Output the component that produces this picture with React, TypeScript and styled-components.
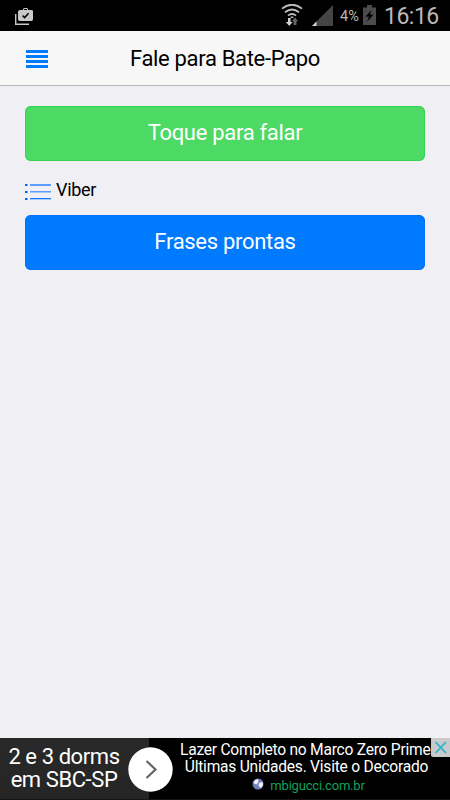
import React from 'react';
import styled, { createGlobalStyle } from 'styled-components';

const GlobalStyle = createGlobalStyle`
  *, *::before, *::after { box-sizing: border-box; }
  body { margin: 0; background: #efeff4; font-family: Roboto, sans-serif; }
`;

const Screen = styled.div`
  display: flex;
  flex-direction: column;
  width: 450px;
  height: 800px;
  overflow: hidden;
  background: #efeff4;
`;

const StatusBar = styled.div`
  display: flex;
  flex: 0 0 31px;
  justify-content: space-between;
  background: #000;
  padding: 0 11px 0 15px;
`;

const StatusGroup = styled.div`
  display: flex;
  align-items: flex-start;
`;

const Icon = styled.svg<{ $left?: number; $top?: number }>`
  display: block;
  flex: none;
  margin-left: ${(p) => p.$left ?? 0}px;
  margin-top: ${(p) => p.$top ?? 0}px;
`;

const Battery = styled.span`
  width: 19px;
  margin: 8px 0 0 7px;
  color: #b9b9b9;
  font-size: 14.5px;
  line-height: 17px;
  white-space: nowrap;
`;

const Clock = styled.span`
  width: 55px;
  margin: 3px 0 0 8px;
  color: #b9b9b9;
  font-size: 23px;
  letter-spacing: -0.5px;
  line-height: 28px;
  white-space: nowrap;
`;

const Header = styled.header`
  display: grid;
  grid-template-columns: 26px 348px 26px;
  flex: 0 0 55px;
  height: 55px;
  padding: 0 25px;
  background: #f7f7f8;
  border-bottom: 1px solid #b7b7bb;
`;

const Title = styled.h1`
  margin: 0;
  padding-top: 1px;
  color: #000;
  font-size: 22px;
  font-weight: 400;
  letter-spacing: -0.32px;
  line-height: 53px;
  text-align: center;
`;

const Content = styled.main`
  display: flex;
  flex: 1;
  flex-direction: column;
  padding: 20px 25px 0;
`;

const ActionButton = styled.button<{ $color: string; $edge: string }>`
  height: 55px;
  padding: 0 0 2px;
  border: 0;
  border-radius: 6px;
  background: ${(p) => p.$color};
  box-shadow: inset 0 0 0 1px ${(p) => p.$edge};
  color: #fff;
  font: 400 22px/53px Roboto, sans-serif;
  letter-spacing: -0.3px;
`;

const Target = styled.div`
  display: flex;
  height: 54px;
  color: #000;
  font-size: 18px;
  letter-spacing: -0.3px;
  line-height: 58px;
`;

const TargetName = styled.span`
  margin-left: 4px;
`;

const Ad = styled.footer`
  position: relative;
  display: flex;
  flex: 0 0 62px;
  background: #000;
  color: #fff;
  border-bottom: 1px solid #151515;
`;

const Offer = styled.div`
  width: 149px;
  padding: 7px 21px 0 0;
  background: linear-gradient(#292929, #252525);
  font-size: 22px;
  letter-spacing: -0.42px;
  line-height: 23px;
  text-align: center;
  white-space: nowrap;
`;

const AdCopy = styled.div`
  width: 253px;
  margin-left: 31px;
  padding-top: 4px;
  font-size: 15.6px;
  letter-spacing: -0.25px;
  line-height: 17px;
  text-align: center;
  white-space: nowrap;
`;

const AdLink = styled.div`
  display: flex;
  justify-content: center;
  margin-top: 2px;
  padding-left: 4px;
  color: #10a15c;
  font-size: 13px;
  letter-spacing: -0.2px;
  line-height: 16px;
`;

const LinkText = styled.span`
  margin-left: 6px;
`;

const Arrow = styled.svg`
  position: absolute;
  top: 8px;
  left: 128px;
`;

const Close = styled.svg`
  position: absolute;
  top: 0;
  right: 0;
`;

export default function App() {
  return (
    <Screen>
      <GlobalStyle />
      <StatusBar>
        <Icon $top={8} width="18" height="17" viewBox="0 0 18 17">
          <path d="M.7 6v10.2H14" fill="none" stroke="#c8c8c8" strokeWidth="1.4" />
          <path d="M5 2h3V1l1-1h3l1 1v1h3.5q1.3 0 1.5 1.3V11q0 2-1.5 2H4.7Q3 13 3 11V4q0-2 2-2zm4-1v1h3V1z" fill="#c8c8c8" fillRule="evenodd" />
          <path d="m7.6 7.6 2 2 4-4.4" fill="none" stroke="#000" strokeWidth="1.5" />
        </Icon>
        <StatusGroup>
          <Icon $top={4} width="22" height="22" viewBox="0 0 22 22">
            <g fill="none" stroke="#bdbdbd" strokeWidth="1.8">
              <path d="M1 4.6q10-7.8 20 0" />
              <path d="M4 8.2q7-5.5 14 0" />
              <path d="M7 11.6q4-3.2 8 0" />
            </g>
            <path d="m9 13.2 2-1 2 1-2 1z" fill="#bdbdbd" />
            <path d="M7 14h2.6v4h2L8.3 22l-3.5-4H7z" fill="#d0d0d0" />
            <path d="m14 13.5 3.2 3.8h-1.8V21h-2.8v-3.7h-1.8z" fill="#666" />
          </Icon>
          <Icon $left={9} $top={5} width="21" height="21" viewBox="0 0 21 21">
            <path d="M21 0v21H0z" fill="#444" />
            <path d="M4.5 16.5V21H0z" fill="#d5d5d5" />
          </Icon>
          <Battery>4%</Battery>
          <Icon $left={4} $top={5} width="13" height="20" viewBox="0 0 13 20">
            <path d="M4 0h5v2.5h4V20H0V2.5h4z" fill="#4b4b4b" />
            <path d="m8.5 5-6 6.5 3.5.3-2 5 6.5-7-3.5-.3z" fill="#000" />
          </Icon>
          <Clock>16:16</Clock>
        </StatusGroup>
      </StatusBar>
      <Header>
        <Icon $left={1} $top={19} width="22" height="18" viewBox="0 0 22 18">
          <path d="M0 0h22v3H0zM0 5h22v3H0zM0 10h22v3H0zM0 15h22v3H0z" fill="#007aff" />
        </Icon>
        <Title>Fale para Bate-Papo</Title>
      </Header>
      <Content>
        <ActionButton $color="#4cd964" $edge="#34d552">Toque para falar</ActionButton>
        <Target>
          <Icon $top={22} width="27" height="18" viewBox="0 0 27 18">
            <path d="M0 1h2.5v2H0zM0 8h2.5v2H0zM0 15h2.5v2H0z" fill="#0063ff" />
            <path d="M5 1h21v2H5zM5 8h21v1.5H5z" fill="#5c9eff" />
            <path d="M5 15h21v1.3H5z" fill="#1877ff" />
          </Icon>
          <TargetName>Viber</TargetName>
        </Target>
        <ActionButton $color="#007aff" $edge="#0074ff">Frases prontas</ActionButton>
      </Content>
      <Ad>
        <Offer>2 e 3 dorms<br />em SBC-SP</Offer>
        <AdCopy>
          <div>Lazer Completo no Marco Zero Prime.</div>
          <div>Últimas Unidades. Visite o Decorado</div>
          <AdLink>
            <Icon width="12" height="12" viewBox="0 0 12 12">
              <circle cx="6" cy="6" r="5.5" fill="#7180b8" />
              <path d="M3 2.3 6 1l.5 3-2 2.5L1.5 5zM7 5l3.5-1 .5 3-2 3-2.5-2z" fill="#eef2ff" />
            </Icon>
            <LinkText>mbigucci.com.br</LinkText>
          </AdLink>
        </AdCopy>
        <Arrow width="45" height="46" viewBox="0 0 45 46">
          <circle cx="22.5" cy="23.5" r="22.2" fill="#fff" />
          <path d="m18.5 15 9 8.5-9 8.5" fill="none" stroke="#656565" strokeWidth="2.2" />
        </Arrow>
        <Close width="19" height="19" viewBox="0 0 19 19">
          <path d="M0 0h19v19H2q-2 0-2-2z" fill="#c9cacc" />
          <path d="m4.5 4 10.5 11M15 4 4.5 15" stroke="#28b4cc" strokeWidth="1.8" />
        </Close>
      </Ad>
    </Screen>
  );
}
